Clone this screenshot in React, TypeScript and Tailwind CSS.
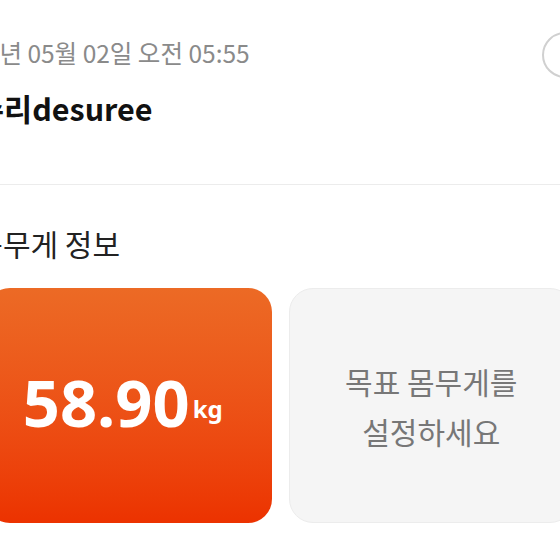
import React from "react";

export default function App() {
  const font = { fontFamily: '"Noto Sans CJK KR", "Noto Sans", sans-serif' };
  const numFont = { fontFamily: '"Noto Sans", "Noto Sans CJK KR", sans-serif' };
  return (
    <div className="w-[560px] h-[560px] overflow-hidden bg-white" style={font}>
      <div className="-ml-[30px] w-[620px]">
        <div className="flex items-start justify-between pt-[36px] pb-[56px] border-b border-[#ececec]">
          <div className="flex flex-col gap-[18px]">
            <div className="-ml-[25px] text-[24.5px] leading-[34px] text-[#8a8a8a] whitespace-nowrap">2024년 05월 02일 오전 05:55</div>
            <div className="-ml-[22px] text-[30.5px] leading-[40px] font-bold text-[#111] whitespace-nowrap">데수리desuree</div>
          </div>
          <div className="mt-[-4px] mr-[2px] w-[46px] h-[46px] rounded-full border-2 border-[#d0d0d0] bg-white" />
        </div>
        <div className="pt-[38px]">
          <div className="-ml-[29px] text-[30px] leading-[40px] font-normal text-[#222] whitespace-nowrap">내 몸무게 정보</div>
          <div className="mt-[25px] px-[16px] grid grid-cols-2 gap-[17px]">
            <div className="h-[235px] rounded-[24px] bg-gradient-to-b from-[#ec6a25] to-[#ec3200] flex items-center justify-center pr-[12px]">
              <div className="flex items-baseline text-white -mt-[6px]" style={numFont}>
                <span className="text-[65px] font-bold leading-none">58.90</span>
                <span className="relative -top-[9px] ml-[3px] text-[24px] font-bold leading-none">kg</span>
              </div>
            </div>
            <div className="h-[235px] rounded-[24px] bg-[#f5f5f5] border border-[#ececec] flex items-center justify-center">
              <div className="text-center text-[30px] leading-[50px] text-[#777] font-normal">
                목표 몸무게를<br />설정하세요
              </div>
            </div>
          </div>
        </div>
      </div>
    </div>
  );
}
